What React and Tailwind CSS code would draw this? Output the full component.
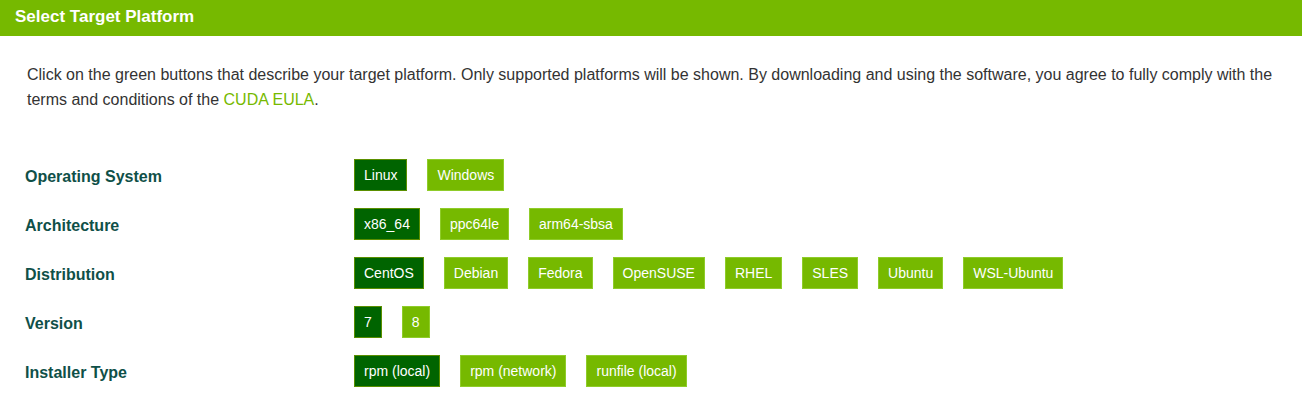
import React from 'react';

const rows = [
  { label: 'Operating System', options: ['Linux', 'Windows'], selected: 'Linux' },
  { label: 'Architecture', options: ['x86_64', 'ppc64le', 'arm64-sbsa'], selected: 'x86_64' },
  {
    label: 'Distribution',
    options: ['CentOS', 'Debian', 'Fedora', 'OpenSUSE', 'RHEL', 'SLES', 'Ubuntu', 'WSL-Ubuntu'],
    selected: 'CentOS',
  },
  { label: 'Version', options: ['7', '8'], selected: '7' },
  { label: 'Installer Type', options: ['rpm (local)', 'rpm (network)', 'runfile (local)'], selected: 'rpm (local)' },
];

const OptionButton = ({ text, active }) => (
  <button
    className={
      active
        ? 'h-8 px-[9px] border border-[#5a8f00] bg-[#006400] text-white text-[14px] leading-none'
        : 'h-8 px-[9px] border border-[#8fcc2a] bg-[#76b900] text-white text-[14px] leading-none'
    }
  >
    {text}
  </button>
);

const App = () => {
  return (
    <div className="w-[1302px] h-[418px] bg-white font-['Liberation_Sans',Arial,sans-serif]">
      <div className="h-9 bg-[#76b900] flex items-center px-[15px]">
        <h2 className="text-white font-bold text-[17px] leading-none -mt-1">Select Target Platform</h2>
      </div>

      <div className="px-[27px] pt-[26px]">
        <p className="text-[#333333] text-[16px] leading-[25px]">
          Click on the green buttons that describe your target platform. Only supported platforms will be shown. By downloading and using the software, you agree to fully comply with the terms and conditions of the{' '}
          <a href="#" className="text-[#76b900]">CUDA EULA</a>.
        </p>
      </div>

      <div className="pl-[25px] pt-[47px] flex flex-col gap-[17px]">
        {rows.map((row) => (
          <div key={row.label} className="flex items-center">
            <div className="w-[329px] pt-1 text-[16px] font-bold text-[#0f5048]">{row.label}</div>
            <div className="flex gap-5">
              {row.options.map((opt) => (
                <OptionButton key={opt} text={opt} active={opt === row.selected} />
              ))}
            </div>
          </div>
        ))}
      </div>
    </div>
  );
};

export default App;
